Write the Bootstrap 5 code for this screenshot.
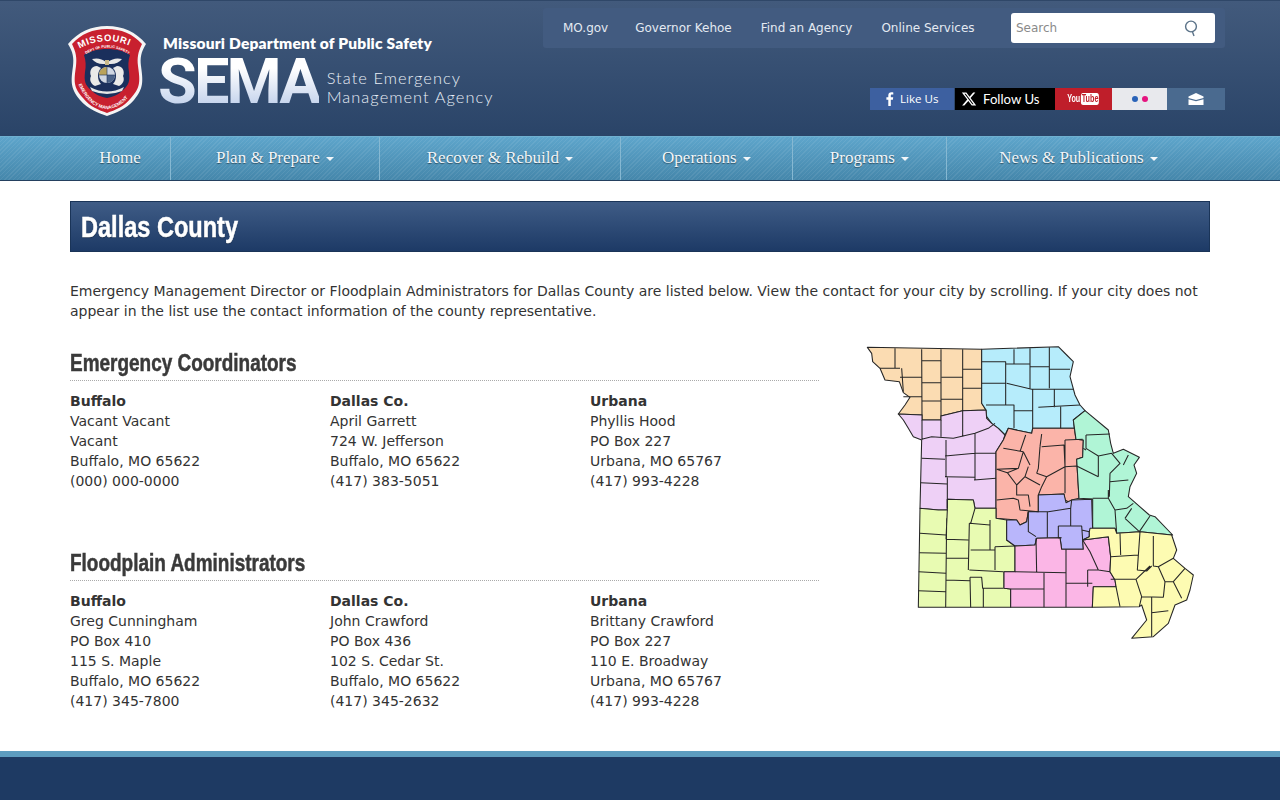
<!DOCTYPE html>
<html lang="en">
<head>
<meta charset="UTF-8">
<meta name="viewport" content="width=device-width, initial-scale=1.0">
<title>Dallas County - SEMA</title>
<link href="https://cdn.jsdelivr.net/npm/bootstrap@5.3.3/dist/css/bootstrap.min.css" rel="stylesheet">
<script src="https://cdn.jsdelivr.net/npm/bootstrap@5.3.3/dist/js/bootstrap.bundle.min.js"></script>
<style>
body { font-family: "DejaVu Sans", sans-serif; font-size: 14px; line-height: 20px; color: #333; }
a { text-decoration: none; }

.site-head { height: 136px; border-top: 1px solid #2f4768; background: linear-gradient(#425a7c, #2a4468); }
.head-inner { width: 1170px; margin: 0 auto; padding-left: 13px; }
.seal { width: 78px; height: 90px; margin-top: 25px; flex: none; }
.brand { margin: 35px 0 0 12px; color: #fff; }
.brand-dept { font: 800 15.5px/15px Lato, sans-serif; letter-spacing: .2px; padding-left: 5px; white-space: nowrap; }
.brand-sema { font: 700 63px/56px Roboto, sans-serif; letter-spacing: -2.9px; margin-top: 3px; height: 56px; background: linear-gradient(#fff 25%, #bccdea); -webkit-background-clip: text; background-clip: text; color: transparent; }
.brand-name { font: 300 16.4px/19px Lato, sans-serif; letter-spacing: 1.05px; color: #e8eef6; margin: 17px 0 0 8px; white-space: nowrap; }

.top-links { width: 682px; height: 40px; margin-top: 7px; background: #425b80; border-radius: 3px; padding: 0 10px 0 20px; }
.top-links a { color: #e4eaf2; font-size: 12px; white-space: nowrap; }
.links-wrap { width: 448px; }
.search-box { width: 204px; height: 30px; background: #fff; border-radius: 3px; padding: 0 17px 0 5px; color: #8a8a8a; font-size: 12px; }
.social-bar { margin-top: 40px; height: 22px; }
.social-bar a { height: 22px; color: #fff; font-size: 11.6px; }
.soc-fb { width: 84px; background: #3d60a0; margin-right: 1px; padding-left: 16px; font-family: "Open Sans", sans-serif; }
.soc-x { width: 100px; background: #000; padding-left: 6px; font-family: Lato, sans-serif; font-size: 13.2px !important; }
.soc-yt { width: 57px; background: #bf1e2a; }
.soc-fl { width: 55px; background: #e8e9ed; }
.soc-mail { width: 58px; background: #4a6a8f; }
.yt-logo { transform: scaleX(.72); }
.yt-you { font: 700 10px/12px "Liberation Sans", sans-serif; }
.yt-tube { font: 700 10px/12px "Liberation Sans", sans-serif; background: #fff; color: #bf1e2a; border-radius: 3px; padding: 0 1px; margin-left: 1px; }
.fl-dot { width: 6px; height: 6px; border-radius: 50%; }

.main-nav { height: 45px; border-top: 1px solid #6fb0d0; border-bottom: 1px solid #24405f;
  background: repeating-linear-gradient(135deg, rgba(255,255,255,.07) 0 1px, transparent 1px 3px), linear-gradient(#5ea5cb, #4587ab); }
.main-nav ul { list-style: none; margin: 0; padding: 0; }
.main-nav li { height: 43px; border-right: 1px solid #86b8d2; flex: none; }
.main-nav li:last-child { border-right: 0; }
.main-nav a { color: #f2f6f9; font: 400 17px/41px "Liberation Serif", serif; text-shadow: 0 1px 1px rgba(0,0,0,.45); display: block; text-align: center; white-space: nowrap; }
.nav-home { width: 101px; }
.nav-plan { width: 209px; }
.nav-recover { width: 241px; }
.nav-ops { width: 172px; }
.nav-prog { width: 154px; }
.nav-news { width: 263px; }
.caret-down { display: inline-block; width: 0; height: 0; border: 4px solid transparent; border-top-color: #f2f6f9; border-bottom: 0; vertical-align: 2px; margin-left: 2px; }

.page-title { height: 51px; margin: 20px 0 29px; padding-left: 10px; border: 1px solid #1a3458; background: linear-gradient(#3f5c86, #1d3a66);
  color: #fff; font: 700 30px/49px "Liberation Sans", sans-serif; text-shadow: 0 1px 1px rgba(0,0,0,.4); }
.squeeze { display: inline-block; transform-origin: left center; white-space: nowrap; -webkit-text-stroke: .5px currentColor; }
.page-title .squeeze { transform: scaleX(.785); }
.section-head .squeeze { transform: scaleX(.79); }
.intro-text { margin: 0 0 28px; }
.left-side { width: 749px; flex: none; }
.contact-block { height: 200px; }
.section-head { color: #3a3a3a; font: 700 24px/28px "Liberation Sans", sans-serif; padding: 0 0 3px; margin: 0 0 10px; border-bottom: 1px dotted #aaa; }
.contact-col { flex: 0 0 260px; }
.contact-col:last-child { flex: 0 0 229px; }
.mo-map { width: 340px; height: 305px; margin: -9px 0 0 41px; flex: none; display: block; }

.site-foot { height: 49px; margin-top: 40px; background: #1e3a63; border-top: 6px solid #5d9cbf; }
</style>
</head>
<body>

<header class="site-head">
  <div class="head-inner d-flex justify-content-between">
    <div class="d-flex">
      <svg class="seal" viewBox="0 0 78 90">
        <path d="M39 0C55 0 68 6 78 18 73 26 72 32 73 40 75 55 76 62 66 74 58 83 48 87 39 90 30 87 20 83 12 74 2 62 3 55 5 40 6 32 5 26 0 18 10 6 23 0 39 0Z" fill="#f5f5f5"/>
        <path d="M39 3C53 3 65 8 74 18 70 26 69 32 70 40 72 55 73 61 63 72 56 81 47 84 39 87 31 84 22 81 15 72 5 61 6 55 8 40 9 32 8 26 4 18 13 8 25 3 39 3Z" fill="#c8202f"/>
        <path d="M39 23C48 23 56 25 62 29 60 35 60 40 61 46 62 55 61 59 55 64 50 69 45 71 39 72 33 71 28 69 23 64 17 59 16 55 17 46 18 40 18 35 16 29 22 25 30 23 39 23Z" fill="#1a2f5c"/>
        <defs>
          <path id="arcTop" d="M6 26Q39 4 73 26"/>
          <path id="arcMid" d="M14 31Q39 12 65 31"/>
          <path id="arcLow" d="M9 55Q20 82 39 83Q58 82 70 55"/>
        </defs>
        <text font-family="Liberation Sans, sans-serif" font-size="9.4" font-weight="700" fill="#fff" letter-spacing=".7"><textPath href="#arcTop" startOffset="9%">MISSOURI</textPath></text>
        <text font-family="Liberation Sans, sans-serif" font-size="3.6" font-weight="700" fill="#fff"><textPath href="#arcMid" startOffset="9%">DEPT OF PUBLIC SAFETY</textPath></text>
        <text font-family="Liberation Sans, sans-serif" font-size="4.6" font-weight="700" fill="#fff"><textPath href="#arcLow" startOffset="4%">EMERGENCY MANAGEMENT</textPath></text>
        <path d="M24 33Q32 31 38 36L40 36Q46 31 54 33 50 38 43 38L35 38Q28 38 24 33Z" fill="#e8e8e8"/>
        <path d="M37 34h4v5h-4z" fill="#c9b98a"/>
        <path d="M29 40C23 40 21 46 23 50 21 54 23 58 27 60L33 58C29 54 29 46 33 42ZM49 40C55 40 57 46 55 50 57 54 55 58 51 60L45 58C49 54 49 46 45 42Z" fill="#e9e9e9"/>
        <path d="M22 61Q39 70 56 61L54 65Q39 71 24 65Z" fill="#e6e6e6"/>
        <circle cx="39" cy="49" r="8" fill="#cfd6e2"/>
        <path d="M39 41A8 8 0 0 0 31 49H39Z" fill="#b9a25a"/>
        <path d="M39 49H47A8 8 0 0 1 39 57Z" fill="#4a6288"/>
        <path d="M39 41V57M31 49H47" stroke="#1a2f5c" stroke-width=".6"/>
      </svg>
      <div class="brand">
        <div class="brand-dept">Missouri Department of Public Safety</div>
        <div class="d-flex">
          <div class="brand-sema">SEMA</div>
          <div class="brand-name">State Emergency<br>Management Agency</div>
        </div>
      </div>
    </div>
    <div>
      <div class="top-links d-flex align-items-center">
        <div class="links-wrap d-flex">
          <a href="#" style="margin-right:27px">MO.gov</a>
          <a href="#" style="margin-right:29px">Governor Kehoe</a>
          <a href="#" style="margin-right:29px">Find an Agency</a>
          <a href="#">Online Services</a>
        </div>
        <div class="search-box d-flex align-items-center justify-content-between">
          <span>Search</span>
          <svg width="14" height="17" viewBox="0 0 14 17" fill="none" stroke="#5a7288" stroke-width="1.4"><circle cx="7" cy="6.5" r="5.4"/><path d="M8.5 12l1.5 4"/></svg>
        </div>
      </div>
      <div class="social-bar d-flex justify-content-end">
        <a href="#" class="soc-fb d-flex align-items-center" style="gap:6px"><svg width="8" height="14" viewBox="0 0 8 14" fill="#fff"><path d="M2.3 14V7.8H.4V5.3h1.9V3.6C2.3 1.4 3.5.3 5.4.3c.9 0 1.6.1 1.9.1v2.2H6c-1 0-1.2.5-1.2 1.2v1.5h2.4l-.3 2.5H4.8V14z"/></svg><span>Like Us</span></a>
        <a href="#" class="soc-x d-flex align-items-center" style="gap:6px"><svg width="16" height="16" viewBox="0 0 24 24" fill="#fff"><path d="M18.244 2.25h3.308l-7.227 8.26 8.502 11.24H16.17l-5.214-6.817L4.99 21.75H1.68l7.73-8.835L1.254 2.25H8.08l4.713 6.231zm-1.161 17.52h1.833L7.084 4.126H5.117z"/></svg><span>Follow Us</span></a>
        <a href="#" class="soc-yt d-flex align-items-center justify-content-center"><span class="yt-logo d-flex"><span class="yt-you">You</span><span class="yt-tube">Tube</span></span></a>
        <a href="#" class="soc-fl d-flex align-items-center justify-content-center gap-1"><span class="fl-dot" style="background:#2a63b8"></span><span class="fl-dot" style="background:#e5147f"></span></a>
        <a href="#" class="soc-mail d-flex align-items-center justify-content-center"><svg width="16" height="12" viewBox="0 0 15 12" fill="#fff"><path d="M7.5 0L15 3.6V5L7.5 7 0 5V3.6z"/><path d="M0 6.2l7.5 2L15 6.2V12H0z"/></svg></a>
      </div>
    </div>
  </div>
</header>

<nav class="main-nav">
  <div class="container px-0">
    <ul class="d-flex">
      <li class="nav-home"><a href="#">Home</a></li>
      <li class="nav-plan"><a href="#">Plan &amp; Prepare <span class="caret-down"></span></a></li>
      <li class="nav-recover"><a href="#">Recover &amp; Rebuild <span class="caret-down"></span></a></li>
      <li class="nav-ops"><a href="#">Operations <span class="caret-down"></span></a></li>
      <li class="nav-prog"><a href="#">Programs <span class="caret-down"></span></a></li>
      <li class="nav-news"><a href="#">News &amp; Publications <span class="caret-down"></span></a></li>
    </ul>
  </div>
</nav>

<main class="container px-0">
  <h1 class="page-title"><span class="squeeze">Dallas County</span></h1>
  <p class="intro-text">Emergency Management Director or Floodplain Administrators for Dallas County are listed below. View the contact for your city by scrolling. If your city does not appear in the list use the contact information of the county representative.</p>
  <div class="d-flex">
    <div class="left-side">
      <section class="contact-block">
        <h2 class="section-head"><span class="squeeze">Emergency Coordinators</span></h2>
        <div class="d-flex">
          <div class="contact-col"><strong>Buffalo</strong><br>Vacant Vacant<br>Vacant<br>Buffalo, MO 65622<br>(000) 000-0000</div>
          <div class="contact-col"><strong>Dallas Co.</strong><br>April Garrett<br>724 W. Jefferson<br>Buffalo, MO 65622<br>(417) 383-5051</div>
          <div class="contact-col"><strong>Urbana</strong><br>Phyllis Hood<br>PO Box 227<br>Urbana, MO 65767<br>(417) 993-4228</div>
        </div>
      </section>
      <section>
        <h2 class="section-head"><span class="squeeze">Floodplain Administrators</span></h2>
        <div class="d-flex">
          <div class="contact-col"><strong>Buffalo</strong><br>Greg Cunningham<br>PO Box 410<br>115 S. Maple<br>Buffalo, MO 65622<br>(417) 345-7800</div>
          <div class="contact-col"><strong>Dallas Co.</strong><br>John Crawford<br>PO Box 436<br>102 S. Cedar St.<br>Buffalo, MO 65622<br>(417) 345-2632</div>
          <div class="contact-col"><strong>Urbana</strong><br>Brittany Crawford<br>PO Box 227<br>110 E. Broadway<br>Urbana, MO 65767<br>(417) 993-4228</div>
        </div>
      </section>
    </div>
    <svg class="mo-map" viewBox="0 0 1020 915" stroke="#262626" stroke-width="3.2" stroke-linejoin="round">
      <polygon fill="#fbdcb2" points="22,22 365,28 365,190 378,210 308,212 243,228 243,240 186,240 186,225 115,222 135,195 150,172 130,158 118,125 75,120 60,85 38,65 35,40"/>
      <polygon fill="#b6ecfb" points="365,28 595,20 620,45 640,65 630,110 645,165 660,195 675,212 640,240 643,265 518,265 515,280 445,265 435,285 415,265 395,250 380,230 378,210 365,190"/>
      <polygon fill="#eed0f6" points="115,222 186,225 186,240 243,240 243,228 308,212 378,210 380,235 395,250 415,265 435,285 430,300 408,335 408,505 345,505 340,480 262,478 262,510 235,510 180,505 185,300 160,290 145,265 130,240"/>
      <polygon fill="#fbb4a9" points="445,265 515,280 518,265 643,265 648,298 670,300 668,352 650,358 657,475 635,480 630,488 615,480 612,462 535,465 535,515 505,515 500,545 480,555 470,540 408,535 408,335 430,300"/>
      <polygon fill="#b0f5d6" points="675,212 745,270 752,310 760,340 790,328 838,352 822,375 830,400 810,440 805,470 868,525 885,530 938,585 840,575 770,580 765,565 698,565 698,477 657,475 650,358 668,352 670,300 648,298 640,240"/>
      <polygon fill="#e8fbb2" points="180,505 235,510 262,510 262,478 340,480 345,505 408,505 408,535 440,540 440,600 465,618 465,695 432,695 432,745 452,747 452,802 175,802"/>
      <polygon fill="#b9b6fb" points="440,540 470,540 480,555 500,545 505,515 535,515 535,465 612,462 618,488 635,480 695,478 698,572 688,575 688,590 668,600 670,628 605,628 600,593 530,595 525,615 465,618 440,600"/>
      <polygon fill="#fbb6e6" points="465,618 525,615 530,595 600,593 605,628 670,628 668,600 745,590 752,650 750,695 765,720 768,740 700,740 697,802 452,802 452,747 432,745 432,695 465,695"/>
      <polygon fill="#fdfbb2" points="690,565 765,565 770,580 840,575 935,585 950,630 940,655 975,685 1000,705 990,750 980,780 945,795 925,850 880,890 815,895 860,840 845,795 838,800 697,802 700,740 768,740 765,720 750,695 752,650 745,590 668,600 688,590 688,575"/>
      <path fill="none" d="M105 25V85M185 28L186 225M243 28V228M308 28V212M60 85H120M120 112H185M186 62H243M245 112H308M308 88H365M186 128H243M186 183H243M130 170H186M243 178H308M308 145H365M125 85L130 155
        M365 65H437V195M365 130H437M437 72H510M462 28V72M510 25V145M568 22V145M510 80H568M568 88H630M440 130L515 148H640M518 148V265M583 148V202M378 195H462V265M462 212H518M535 202L660 195M602 200V265
        M186 240V300M243 240V290M308 212V290M258 300V410M185 355L255 358M255 348L345 340M345 280V420M345 340H408M255 410L345 412M182 428L262 432M262 410V505M342 420L408 415M185 298L215 290 280 295 345 280 385 265 405 250
        M430 325L490 335M497 285L480 335M545 282L540 320M490 335L510 375M410 388L475 385L490 335M545 320L612 315 615 380M615 300L668 298M615 300V460M540 320L535 385 530 400M505 380L495 410 470 435 442 398 475 385M470 435V465H505L510 500M530 400L560 410 615 380M560 410L545 440 535 465M615 380L650 378M495 410L540 435M442 398L410 388M410 480L460 475 475 480 480 510 535 515
        M678 285L750 282M678 285V325L715 348 755 340M670 325L678 330M715 348V410M650 378L715 410M750 400L748 470M755 340L780 370 750 400M750 425L805 420M790 375L805 345M698 475H745L765 510 800 505 820 490M765 510L770 580M795 535L838 575 870 528M795 535L815 505M745 450V475
        M180 580L258 585M178 638L258 640M176 695L258 700M175 752L257 755M260 535L257 802M262 510L258 598M258 598L325 600M260 655H325M258 720L330 722M328 550L325 690M332 630H405M390 540V630M328 550L390 555M405 620V690M405 620L465 618M328 690L430 695M330 712H365L368 745H430M330 712L332 802M370 745V802M345 505L332 550
        M505 515V575L528 590M562 515V593M535 515H565L632 505 635 480M632 505V558M595 558H665L668 600M595 558V593H605M665 570L688 575
        M528 595L530 698M465 695L618 698M618 628V802M552 698V802M452 747H552M618 730H697M683 690V740M683 690H715L690 635 668 600M715 690L750 695
        M780 580L782 645M752 650L835 645M835 645L832 690M752 718H828M768 740L780 800M828 718L845 770 838 800M845 770L910 772M840 575L832 690 860 693 875 678M880 588V678L895 680M895 680L940 655M895 680L915 725H940L975 685M828 718L870 678M910 772L915 725M940 725L965 775M875 772V890M875 818L925 812"/>
    </svg>
  </div>
</main>

<footer class="site-foot"></footer>

</body>
</html>
